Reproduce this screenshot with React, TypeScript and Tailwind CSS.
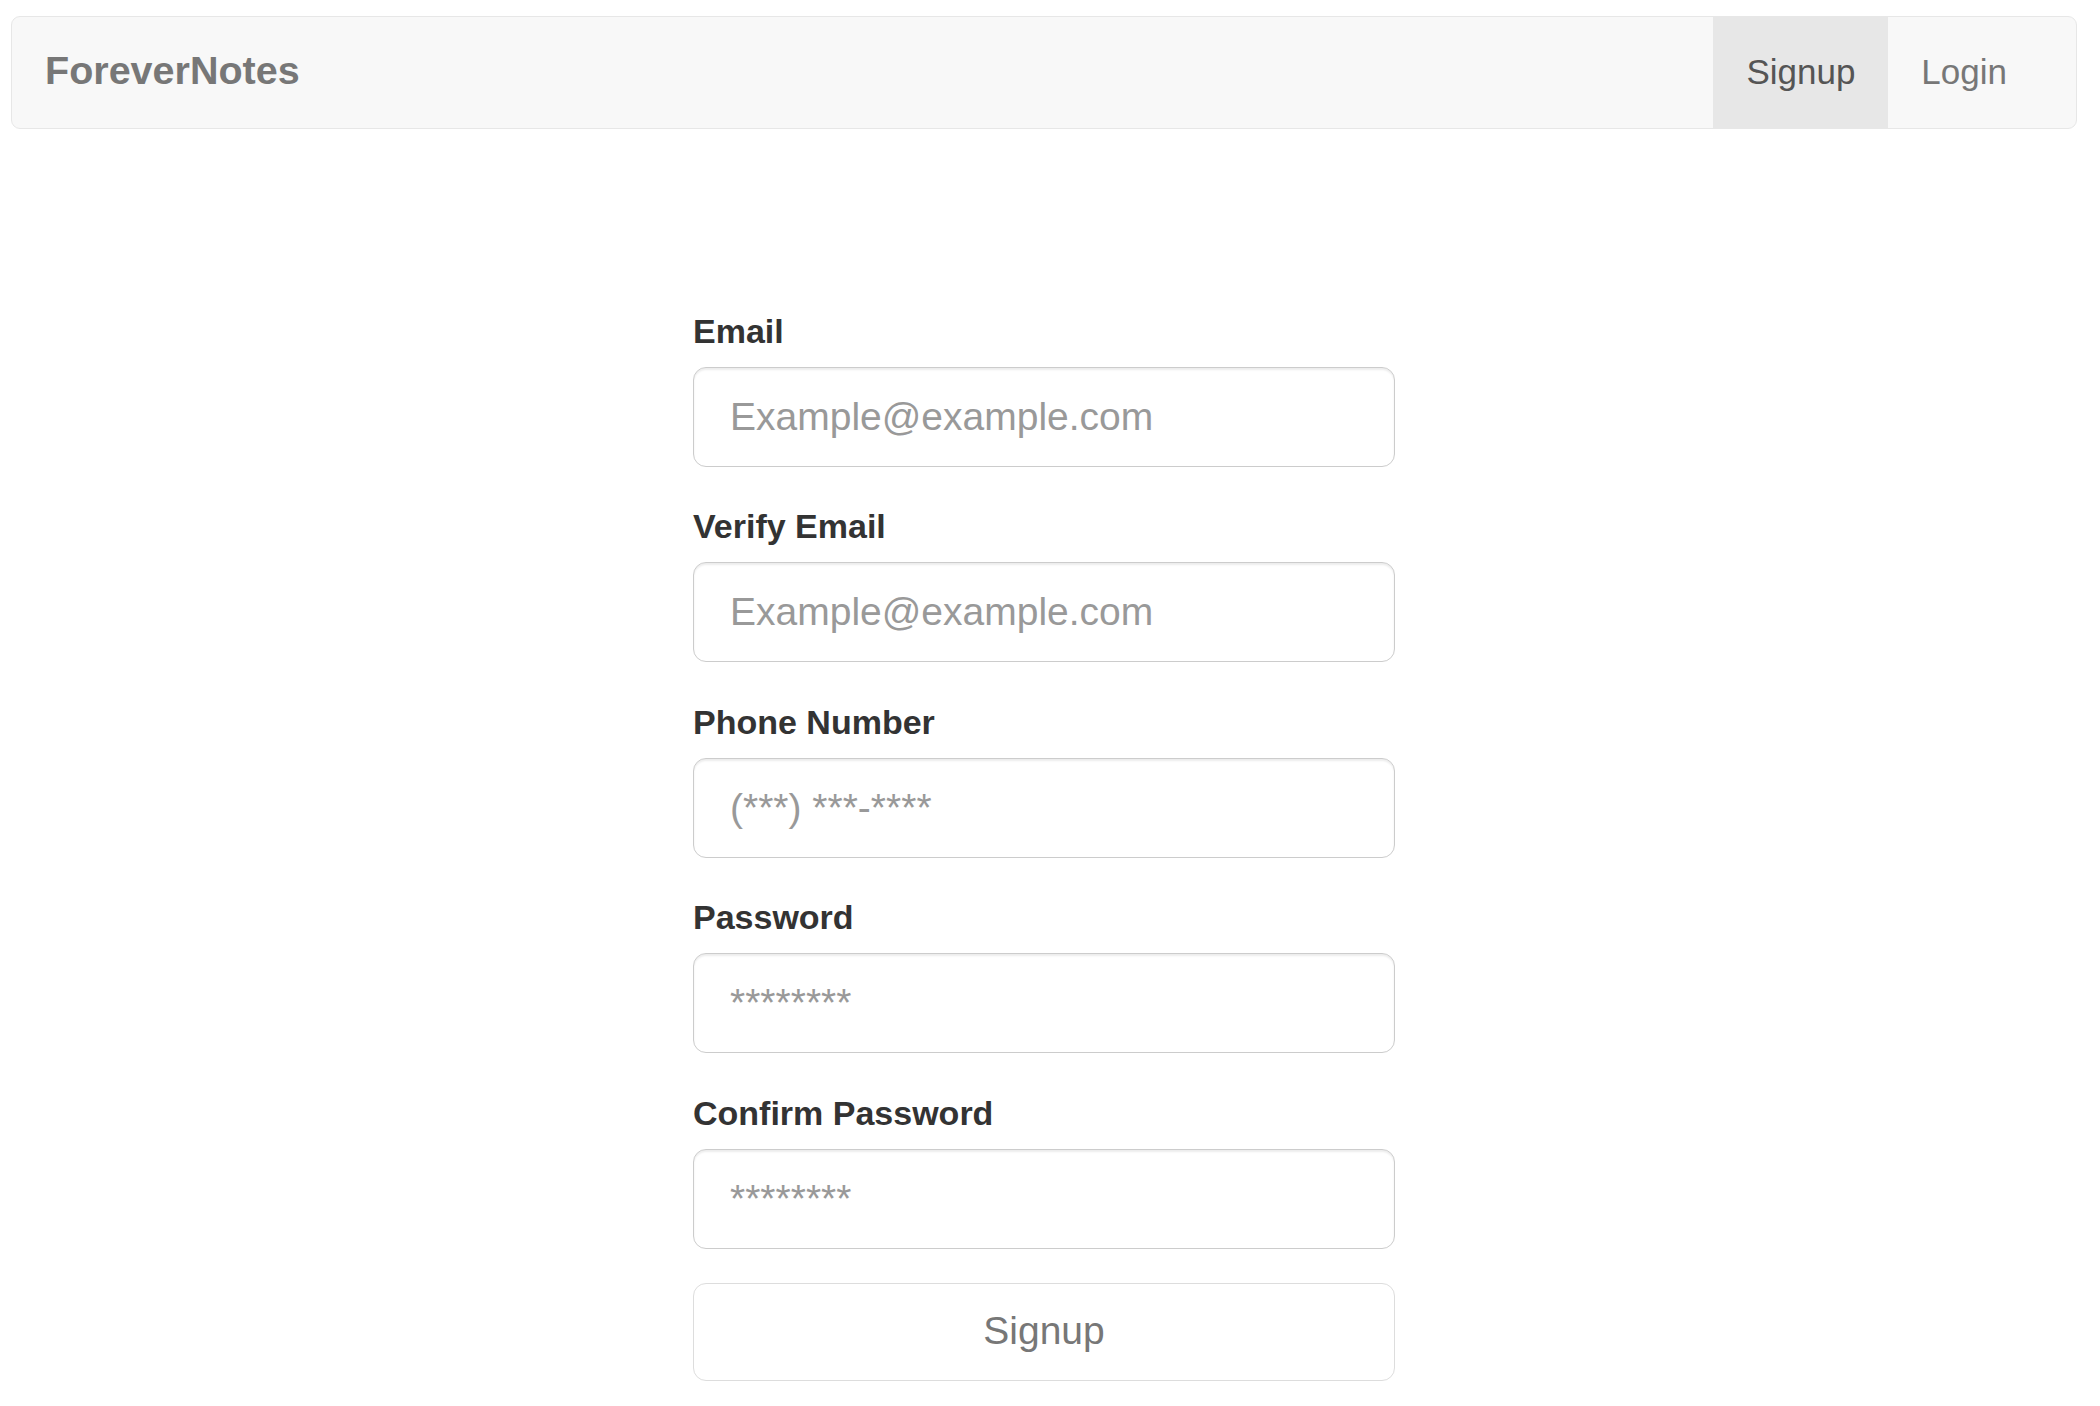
import React from "react";

const fields = [
  { label: "Email", placeholder: "Example@example.com", type: "email" },
  { label: "Verify Email", placeholder: "Example@example.com", type: "email" },
  { label: "Phone Number", placeholder: "(***) ***-****", type: "tel" },
  { label: "Password", placeholder: "********", type: "password" },
  { label: "Confirm Password", placeholder: "********", type: "password" },
];

export default function App() {
  return (
    <div className="min-h-screen bg-white pr-[12px] font-['Liberation_Sans',Arial,sans-serif]">
      {/* Navbar */}
      <nav className="mx-[11px] mt-4 flex h-[113px] items-stretch justify-between rounded-[9px] border border-[#e7e7e7] bg-[#f8f8f8]">
        <div className="flex items-center pl-[33px] pb-[3px]">
          <span className="text-[39.5px] font-bold text-[#777]">ForeverNotes</span>
        </div>
        <ul className="flex items-stretch pr-[36px]">
          <li className="flex items-center bg-[#e7e7e7] px-[33px] text-[35px] text-[#555]">Signup</li>
          <li className="flex items-center px-[33px] text-[35px] text-[#777]">Login</li>
        </ul>
      </nav>

      {/* Signup form */}
      <form className="mx-auto mt-[177.5px] w-[702px]" onSubmit={(e) => e.preventDefault()}>
        {fields.map((f, i) => (
          <div key={f.label} className={i === fields.length - 1 ? "mb-[34px]" : "mb-[35.5px]"}>
            <label className="mb-[11px] block text-[34px] font-bold leading-[49px] text-[#333]">
              {f.label}
            </label>
            <input
              type={f.type === "password" ? "text" : f.type}
              placeholder={f.placeholder}
              className="block h-[100px] w-full rounded-[13px] border border-[#ccc] bg-white px-[36px] text-[39px] text-[#555] shadow-[inset_0_2px_2px_rgba(0,0,0,0.075)] outline-none placeholder:text-[#999]"
            />
          </div>
        ))}
        <button
          type="submit"
          className="block h-[98px] w-full rounded-[13px] border border-[#ddd] bg-white text-[39px] text-[#777]"
        >
          Signup
        </button>
      </form>
    </div>
  );
}
